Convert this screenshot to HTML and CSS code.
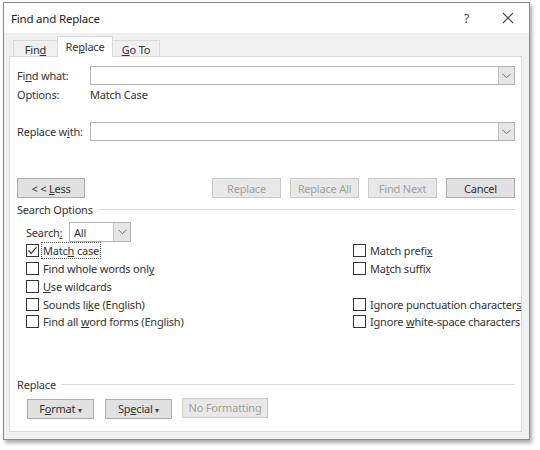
FILE: index.html
```html
<html>
<head>
  <meta name="viewport" content="width=device-width, initial-scale=1">
  <title>Find and Replace</title>
  <link rel="stylesheet" href="styles.css">
</head>
<body>
  <div class="window">
    <div class="titlebar">
      <span class="title">Find and Replace</span>
      <span class="help">?</span>
      <span class="close">
        <svg width="12" height="12" viewBox="0 0 12 12"><path d="M1 1 L11 11 M11 1 L1 11" stroke="#444" stroke-width="1.1" fill="none"/></svg>
      </span>
    </div>

    <div class="client">
      <div class="tabs">
        <div class="tab tab-find">Fin<u>d</u></div>
        <div class="tab tab-replace active">Re<u>p</u>lace</div>
        <div class="tab tab-goto"><u>G</u>o To</div>
      </div>

      <div class="panel">
        <div class="field-row">
          <span class="field-label">Fi<u>n</u>d what:</span>
          <div class="combo">
            <div class="combo-text"></div>
            <div class="combo-arrow">
              <svg width="9" height="6" viewBox="0 0 9 6"><path d="M0.5 0.8 L4.5 4.8 L8.5 0.8" stroke="#707070" stroke-width="1" fill="none"/></svg>
            </div>
          </div>
        </div>

        <div class="options-row">
          <span class="field-label">Options:</span>
          <span>Match Case</span>
        </div>

        <div class="field-row replace-row">
          <span class="field-label">Replace w<u>i</u>th:</span>
          <div class="combo">
            <div class="combo-text"></div>
            <div class="combo-arrow">
              <svg width="9" height="6" viewBox="0 0 9 6"><path d="M0.5 0.8 L4.5 4.8 L8.5 0.8" stroke="#707070" stroke-width="1" fill="none"/></svg>
            </div>
          </div>
        </div>

        <div class="button-row">
          <button class="btn btn-less">&lt; &lt; <u>L</u>ess</button>
          <div class="spacer"></div>
          <button class="btn" disabled>Replace</button>
          <button class="btn" disabled>Replace All</button>
          <button class="btn" disabled>Find Next</button>
          <button class="btn">Cancel</button>
        </div>

        <div class="group-title">
          <span>Search Options</span>
          <div class="rule"></div>
        </div>

        <div class="search-row">
          <span class="search-label">Search<u>:</u></span>
          <div class="select">
            <div class="select-text">All</div>
            <div class="select-arrow">
              <svg width="9" height="6" viewBox="0 0 9 6"><path d="M0.5 0.8 L4.5 4.8 L8.5 0.8" stroke="#707070" stroke-width="1" fill="none"/></svg>
            </div>
          </div>
        </div>

        <div class="checks">
          <div class="check">
            <span class="box checked">
              <svg width="11" height="11" viewBox="0 0 11 11"><path d="M1.5 5.5 L4.3 8.3 L9.5 2.2" stroke="#333" stroke-width="1.2" fill="none"/></svg>
            </span>
            <span class="focus">Matc<u>h</u> case</span>
          </div>
          <div class="check"><span class="box"></span><span>Match prefi<u>x</u></span></div>

          <div class="check"><span class="box"></span><span>Find whole words onl<u>y</u></span></div>
          <div class="check"><span class="box"></span><span>Ma<u>t</u>ch suffix</span></div>

          <div class="check"><span class="box"></span><span><u>U</u>se wildcards</span></div>
          <div class="check empty"></div>

          <div class="check"><span class="box"></span><span>Sounds li<u>k</u>e (English)</span></div>
          <div class="check"><span class="box"></span><span>Ignore punctuation character<u>s</u></span></div>

          <div class="check"><span class="box"></span><span>Find all <u>w</u>ord forms (English)</span></div>
          <div class="check"><span class="box"></span><span>Ignore <u>w</u>hite-space characters</span></div>
        </div>

        <div class="group-title replace-title">
          <span>Replace</span>
          <div class="rule"></div>
        </div>

        <div class="format-row">
          <button class="btn btn-format">F<u>o</u>rmat <span class="caret">&#9662;</span></button>
          <button class="btn btn-special">Sp<u>e</u>cial <span class="caret">&#9662;</span></button>
          <button class="btn btn-noformat" disabled>No Formatting</button>
        </div>
      </div>
    </div>
  </div>
</body>
</html>
```

FILE: styles.css
```css
body {
  margin: 0;
  background-color: #fff;
  font-family: "Noto Sans", "Open Sans", sans-serif;
  font-size: 11px;
  letter-spacing: -0.2px;
  color: #333;
}

u {
  text-decoration-thickness: 1px;
  text-underline-offset: 1px;
}

.window {
  margin: 2px 0 0 3px;
  width: 527px;
  height: 438px;
  box-sizing: border-box;
  border: 1px solid #8a8a8a;
  background-color: #f0f0f0;
  box-shadow: 2px 3px 4px rgba(0, 0, 0, 0.35);
  display: flex;
  flex-direction: column;
}

/* barra de titulo */
.titlebar {
  height: 30px;
  background-color: #fff;
  display: flex;
  align-items: center;
  padding-left: 7px;
}

.title {
  font-size: 11.5px;
  color: #222;
}

.help {
  margin-left: auto;
  font-size: 12px;
  color: #444;
}

.close {
  display: flex;
  margin-left: 33px;
  margin-right: 15px;
}

/* pestañas */
.client {
  flex: 1;
  padding: 4px 0 0 0;
}

.tabs {
  display: flex;
  align-items: flex-end;
  height: 20px;
  padding-left: 9px;
  position: relative;
  z-index: 1;
  margin-bottom: -1px;
}

.tab {
  box-sizing: border-box;
  height: 17px;
  border: 1px solid #d9d9d9;
  border-bottom: none;
  display: flex;
  align-items: center;
  justify-content: center;
  color: #333;
}

.tab-find {
  width: 44px;
  border-right: none;
}

.tab-replace {
  width: 56px;
}

.tab-goto {
  width: 47px;
  border-left: none;
}

.tab.active {
  height: 21px;
  background-color: #fff;
  padding-bottom: 2px;
}

.panel {
  box-sizing: border-box;
  margin-left: 5px;
  width: 513px;
  height: 376px;
  background-color: #fff;
  border: 1px solid #d9d9d9;
  padding: 9px 6px 0 7px;
}

/* campos de texto */
.field-row {
  display: flex;
  align-items: center;
  height: 19px;
}

.field-label {
  width: 73px;
  flex-shrink: 0;
}

.combo {
  flex: 1;
  height: 19px;
  box-sizing: border-box;
  border: 1px solid #b4b4b4;
  display: flex;
}

.combo-text {
  flex: 1;
}

.combo-arrow,
.select-arrow {
  width: 15px;
  background-color: #e6e6e6;
  border-left: 1px solid #c4c4c4;
  display: flex;
  align-items: center;
  justify-content: center;
}

.options-row {
  display: flex;
  align-items: center;
  height: 17px;
  margin-top: 1px;
}

.replace-row {
  margin-top: 19px;
}

/* botones */
.button-row {
  display: flex;
  margin-top: 37px;
  gap: 9px;
}

.spacer {
  flex: 1;
}

.btn {
  width: 69px;
  height: 20px;
  box-sizing: border-box;
  padding: 0;
  font-family: inherit;
  font-size: 11px;
  letter-spacing: -0.2px;
  color: #333;
  background-color: #e1e1e1;
  border: 1px solid #adadad;
  border-radius: 0;
  white-space: nowrap;
}

.btn:disabled {
  color: #a0a0a0;
  background-color: #e8e8e8;
  border-color: #cacaca;
}

.btn-less {
  width: 68px;
}

/* secciones */
.group-title {
  display: flex;
  align-items: center;
  height: 16px;
  margin-top: 3px;
}

.rule {
  flex: 1;
  height: 1px;
  background-color: #dcdcdc;
  margin-left: 5px;
}

.search-row {
  display: flex;
  align-items: center;
  height: 20px;
  margin-top: 5px;
  padding-left: 9px;
}

.search-label {
  width: 43px;
}

.select {
  width: 62px;
  height: 20px;
  box-sizing: border-box;
  border: 1px solid #b4b4b4;
  display: flex;
}

.select-text {
  flex: 1;
  padding-left: 4px;
  display: flex;
  align-items: center;
}

.select-arrow {
  width: 16px;
}

/* casillas */
.checks {
  display: grid;
  grid-template-columns: 327px 1fr;
  grid-auto-rows: 17.75px;
  padding-left: 9px;
}

.check {
  display: flex;
  align-items: center;
  white-space: nowrap;
}

.box {
  width: 11px;
  height: 11px;
  flex-shrink: 0;
  border: 1px solid #333;
  margin-right: 4px;
  display: flex;
  align-items: center;
  justify-content: center;
}

.focus {
  outline: 1px dotted #555;
  padding: 0 1px;
  margin-left: -1px;
}

.replace-title {
  margin-top: 46px;
}

.format-row {
  display: flex;
  gap: 11px;
  margin-top: 6px;
  padding-left: 10px;
}

.btn-format,
.btn-special {
  width: 67px;
}

.btn-noformat {
  width: 86px;
  margin-left: -1px;
  position: relative;
  top: -1px;
}

.caret {
  font-size: 8px;
  color: #444;
}
```
